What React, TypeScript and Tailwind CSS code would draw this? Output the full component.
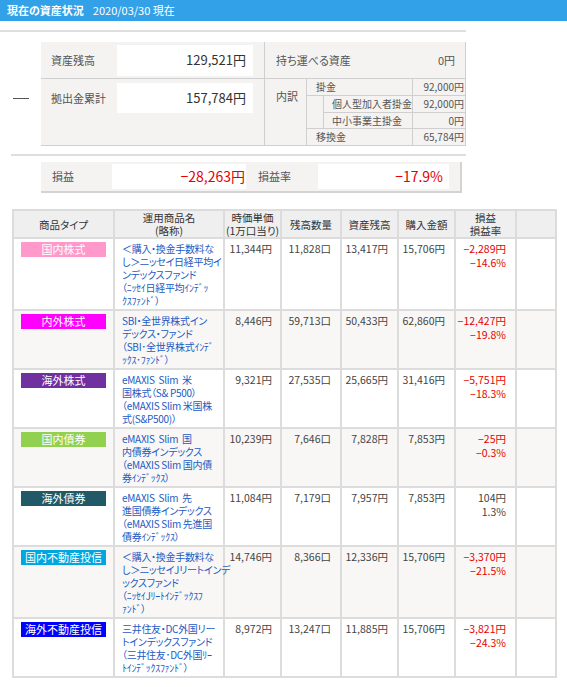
import React from "react";

type Fund = {
    type: string;
    badge: string;
    name: string[];
    price: string;
    qty: string;
    balance: string;
    buy: string;
    pl: string;
    rate: string;
    neg: boolean;
};

const funds: Fund[] = [
    {
        type: "国内株式", badge: "bg-[#ff99cc]",
        name: ["＜購入・換金手数料な", "し＞ニッセイ日経平均イ", "ンデックスファンド", "（ﾆｯｾｲ日経平均ｲﾝﾃﾞｯ", "ｸｽﾌｧﾝﾄﾞ）"],
        price: "11,344円", qty: "11,828口", balance: "13,417円", buy: "15,706円", pl: "−2,289円", rate: "−14.6%", neg: true,
    },
    {
        type: "内外株式", badge: "bg-[#ff00ff]",
        name: ["SBI・全世界株式イン", "デックス・ファンド", "（SBI･全世界株式ｲﾝﾃﾞ", "ｯｸｽ･ﾌｧﾝﾄﾞ）"],
        price: "8,446円", qty: "59,713口", balance: "50,433円", buy: "62,860円", pl: "−12,427円", rate: "−19.8%", neg: true,
    },
    {
        type: "海外株式", badge: "bg-[#7030a0]",
        name: ["eMAXIS  Slim  米", "国株式（S& P500）", "（eMAXIS Slim 米国株", "式(S&P500)）"],
        price: "9,321円", qty: "27,535口", balance: "25,665円", buy: "31,416円", pl: "−5,751円", rate: "−18.3%", neg: true,
    },
    {
        type: "国内債券", badge: "bg-[#92d050]",
        name: ["eMAXIS  Slim  国", "内債券インデックス", "（eMAXIS Slim 国内債", "券ｲﾝﾃﾞｯｸｽ）"],
        price: "10,239円", qty: "7,646口", balance: "7,828円", buy: "7,853円", pl: "−25円", rate: "−0.3%", neg: true,
    },
    {
        type: "海外債券", badge: "bg-[#215967]",
        name: ["eMAXIS  Slim  先", "進国債券インデックス", "（eMAXIS Slim 先進国", "債券ｲﾝﾃﾞｯｸｽ）"],
        price: "11,084円", qty: "7,179口", balance: "7,957円", buy: "7,853円", pl: "104円", rate: "1.3%", neg: false,
    },
    {
        type: "国内不動産投信", badge: "bg-[#00a6e0]",
        name: ["＜購入・換金手数料な", "し＞ニッセイJリートインデ", "ックスファンド", "（ﾆｯｾｲJﾘｰﾄｲﾝﾃﾞｯｸｽﾌ", "ｧﾝﾄﾞ）"],
        price: "14,746円", qty: "8,366口", balance: "12,336円", buy: "15,706円", pl: "−3,370円", rate: "−21.5%", neg: true,
    },
    {
        type: "海外不動産投信", badge: "bg-[#0000ff]",
        name: ["三井住友・DC外国リー", "トインデックスファンド", "（三井住友･DC外国ﾘｰ", "ﾄｲﾝﾃﾞｯｸｽﾌｧﾝﾄﾞ）"],
        price: "8,972円", qty: "13,247口", balance: "11,885円", buy: "15,706円", pl: "−3,821円", rate: "−24.3%", neg: true,
    },
];

const font = "font-['Noto_Sans_CJK_JP','Noto_Sans',sans-serif] [font-feature-settings:'palt']";

export default function App() {
    return (
        <div className={`w-[567px] min-h-[687px] bg-white text-[#444] ${font}`}>
            <div className="h-[21px] bg-[#33a1e8] flex items-center pl-[7px] text-white text-[11px] leading-none">
                <span className="font-bold">現在の資産状況</span>
                <span className="ml-[9px]">2020/03/30 現在</span>
            </div>

            <div className="mt-[9px] w-[466px] border-t-2 border-[#dedede]"/>

            {/* summary */}
            <div className="flex mt-[10px]">
                <div className="w-[41px] flex items-center justify-center">
                    <div className="w-[16px] h-px bg-[#555] mt-[8px]"/>
                </div>
                <div className="w-[425px] h-[104px] bg-[#f4f3f1] flex border-b border-r border-[#cfcfcf]">
                    <div className="w-[224px] flex flex-col">
                        <div className="h-[37px] flex items-center border-b border-[#cfcfcf]">
                            <span className="w-[76px] pl-[10px] text-[11px] text-[#555]">資産残高</span>
                            <div className="w-[136px] h-[31px] bg-white flex items-center justify-end pr-[7px] text-[13px] text-[#333]">
                                129,521円
                            </div>
                        </div>
                        <div className="flex-1 flex items-start pt-[4px]">
                            <span className="w-[76px] pl-[10px] text-[11px] text-[#555] h-[30px] flex items-center">拠出金累計</span>
                            <div className="w-[136px] h-[30px] bg-white flex items-center justify-end pr-[7px] text-[13px] text-[#333]">
                                157,784円
                            </div>
                        </div>
                    </div>
                    <div className="flex-1 flex flex-col border-l border-[#cfcfcf] text-[11px] text-[#555]">
                        <div className="h-[37px] flex items-center justify-between pl-[11px] pr-[10px] border-b border-[#cfcfcf]">
                            <span>持ち運べる資産</span>
                            <span>0円</span>
                        </div>
                        <div className="h-[66px] flex">
                            <div className="w-[41px] pl-[11px] pt-[9px]">内訳</div>
                            <div className="flex-1 flex flex-col border-l border-[#cfcfcf] text-[10px] leading-[16px]">
                                <div className="h-[17px] flex border-b border-[#cfcfcf]">
                                    <span className="flex-1 pl-[9px] whitespace-nowrap">掛金</span>
                                    <span className="w-[53px] border-l border-[#cfcfcf] text-right pr-[1px]">92,000円</span>
                                </div>
                                <div className="h-[17px] flex">
                                    <span className="w-[16px]"/>
                                    <span className="flex-1 pl-[8px] border-l border-b border-[#cfcfcf] whitespace-nowrap">個人型加入者掛金</span>
                                    <span className="w-[53px] border-l border-b border-[#cfcfcf] text-right pr-[1px]">92,000円</span>
                                </div>
                                <div className="h-[16px] flex border-b border-[#cfcfcf] leading-[15px]">
                                    <span className="w-[16px]"/>
                                    <span className="flex-1 pl-[8px] border-l border-[#cfcfcf] whitespace-nowrap">中小事業主掛金</span>
                                    <span className="w-[53px] border-l border-[#cfcfcf] text-right pr-[1px]">0円</span>
                                </div>
                                <div className="h-[16px] flex">
                                    <span className="flex-1 pl-[9px] whitespace-nowrap">移換金</span>
                                    <span className="w-[53px] border-l border-[#cfcfcf] text-right pr-[1px]">65,784円</span>
                                </div>
                            </div>
                        </div>
                    </div>
                </div>
            </div>

            <div className="mt-[8px] ml-[11px] w-[455px] border-t-2 border-[#dedede]"/>

            {/* profit */}
            <div className="ml-[41px] mt-[6px] w-[421px] h-[31px] bg-[#f4f3f1] border-b-2 border-r-2 border-[#d3d3d3] flex items-center">
                <span className="w-[71px] pl-[11px] text-[11px] text-[#555]">損益</span>
                <div className="w-[134px] h-[25px] bg-white flex items-center justify-end pr-[1px] text-[14px] text-[#e60000]">
                    −28,263円
                </div>
                <span className="w-[72px] pl-[12px] text-[11px] text-[#555]">損益率</span>
                <div className="w-[131px] h-[25px] bg-white flex items-center justify-end pr-[6px] text-[14px] text-[#e60000]">
                    −17.9%
                </div>
            </div>

            {/* table */}
            <table className="ml-[12px] mt-[16px] w-[543px] border-collapse text-[10.5px] table-fixed">
                <colgroup>
                    <col className="w-[101px]"/>
                    <col className="w-[110px]"/>
                    <col className="w-[57px]"/>
                    <col className="w-[60px]"/>
                    <col className="w-[57px]"/>
                    <col className="w-[57px]"/>
                    <col className="w-[61px]"/>
                    <col className="w-[40px]"/>
                </colgroup>
                <thead>
                <tr className="h-[27px] bg-[#efefef] text-[#333] text-[10.5px] leading-[13px] whitespace-nowrap">
                    <th className="font-normal border-2 border-[#dcdcdc] p-0">商品タイプ</th>
                    <th className="font-normal border-2 border-[#dcdcdc] p-0">運用商品名<br/>(略称)</th>
                    <th className="font-normal border-2 border-[#dcdcdc] p-0">時価単価<br/>(1万口当り)</th>
                    <th className="font-normal border-2 border-[#dcdcdc] p-0">残高数量</th>
                    <th className="font-normal border-2 border-[#dcdcdc] p-0">資産残高</th>
                    <th className="font-normal border-2 border-[#dcdcdc] p-0">購入金額</th>
                    <th className="font-normal border-2 border-[#dcdcdc] p-0">損益<br/>損益率</th>
                    <th className="font-normal border-2 border-[#dcdcdc] p-0"></th>
                </tr>
                </thead>
                <tbody>
                {funds.map((f, i) => (
                    <tr key={f.type} className={i % 2 === 1 ? "bg-[#f8f7f5]" : "bg-white"}>
                        <td className="border-2 border-[#dcdcdc] align-top pt-[3px] pl-[7px]">
                            <div className={`w-[85px] h-[15px] ${f.badge} text-white text-center leading-[15px] text-[11px]`}>
                                {f.type}
                            </div>
                        </td>
                        <td className="border-2 border-[#dcdcdc] align-top pt-[3px] pb-[2px] pl-[7px] text-[#1d5bc4] text-[10px] tracking-[-0.3px] whitespace-pre">
                            {f.name.map((l) => (
                                <div key={l} className="h-[13px] leading-[13px] overflow-visible">{l}</div>
                            ))}
                        </td>
                        <td className="border-2 border-[#dcdcdc] align-top pt-[3px] pr-[8px] text-right leading-[13px] whitespace-nowrap">{f.price}</td>
                        <td className="border-2 border-[#dcdcdc] align-top pt-[3px] pr-[9px] text-right leading-[13px] whitespace-nowrap">{f.qty}</td>
                        <td className="border-2 border-[#dcdcdc] align-top pt-[3px] pr-[9px] text-right leading-[13px] whitespace-nowrap">{f.balance}</td>
                        <td className="border-2 border-[#dcdcdc] align-top pt-[3px] pr-[9px] text-right leading-[13px] whitespace-nowrap">{f.buy}</td>
                        <td className={`border-2 border-[#dcdcdc] align-top pt-[3px] pr-[9px] text-right leading-[14px] whitespace-nowrap ${f.neg ? "text-[#e60000]" : "text-[#444]"}`}>
                            <div>{f.pl}</div>
                            <div>{f.rate}</div>
                        </td>
                        <td className="border-2 border-[#dcdcdc]"></td>
                    </tr>
                ))}
                </tbody>
            </table>
        </div>
    );
}
